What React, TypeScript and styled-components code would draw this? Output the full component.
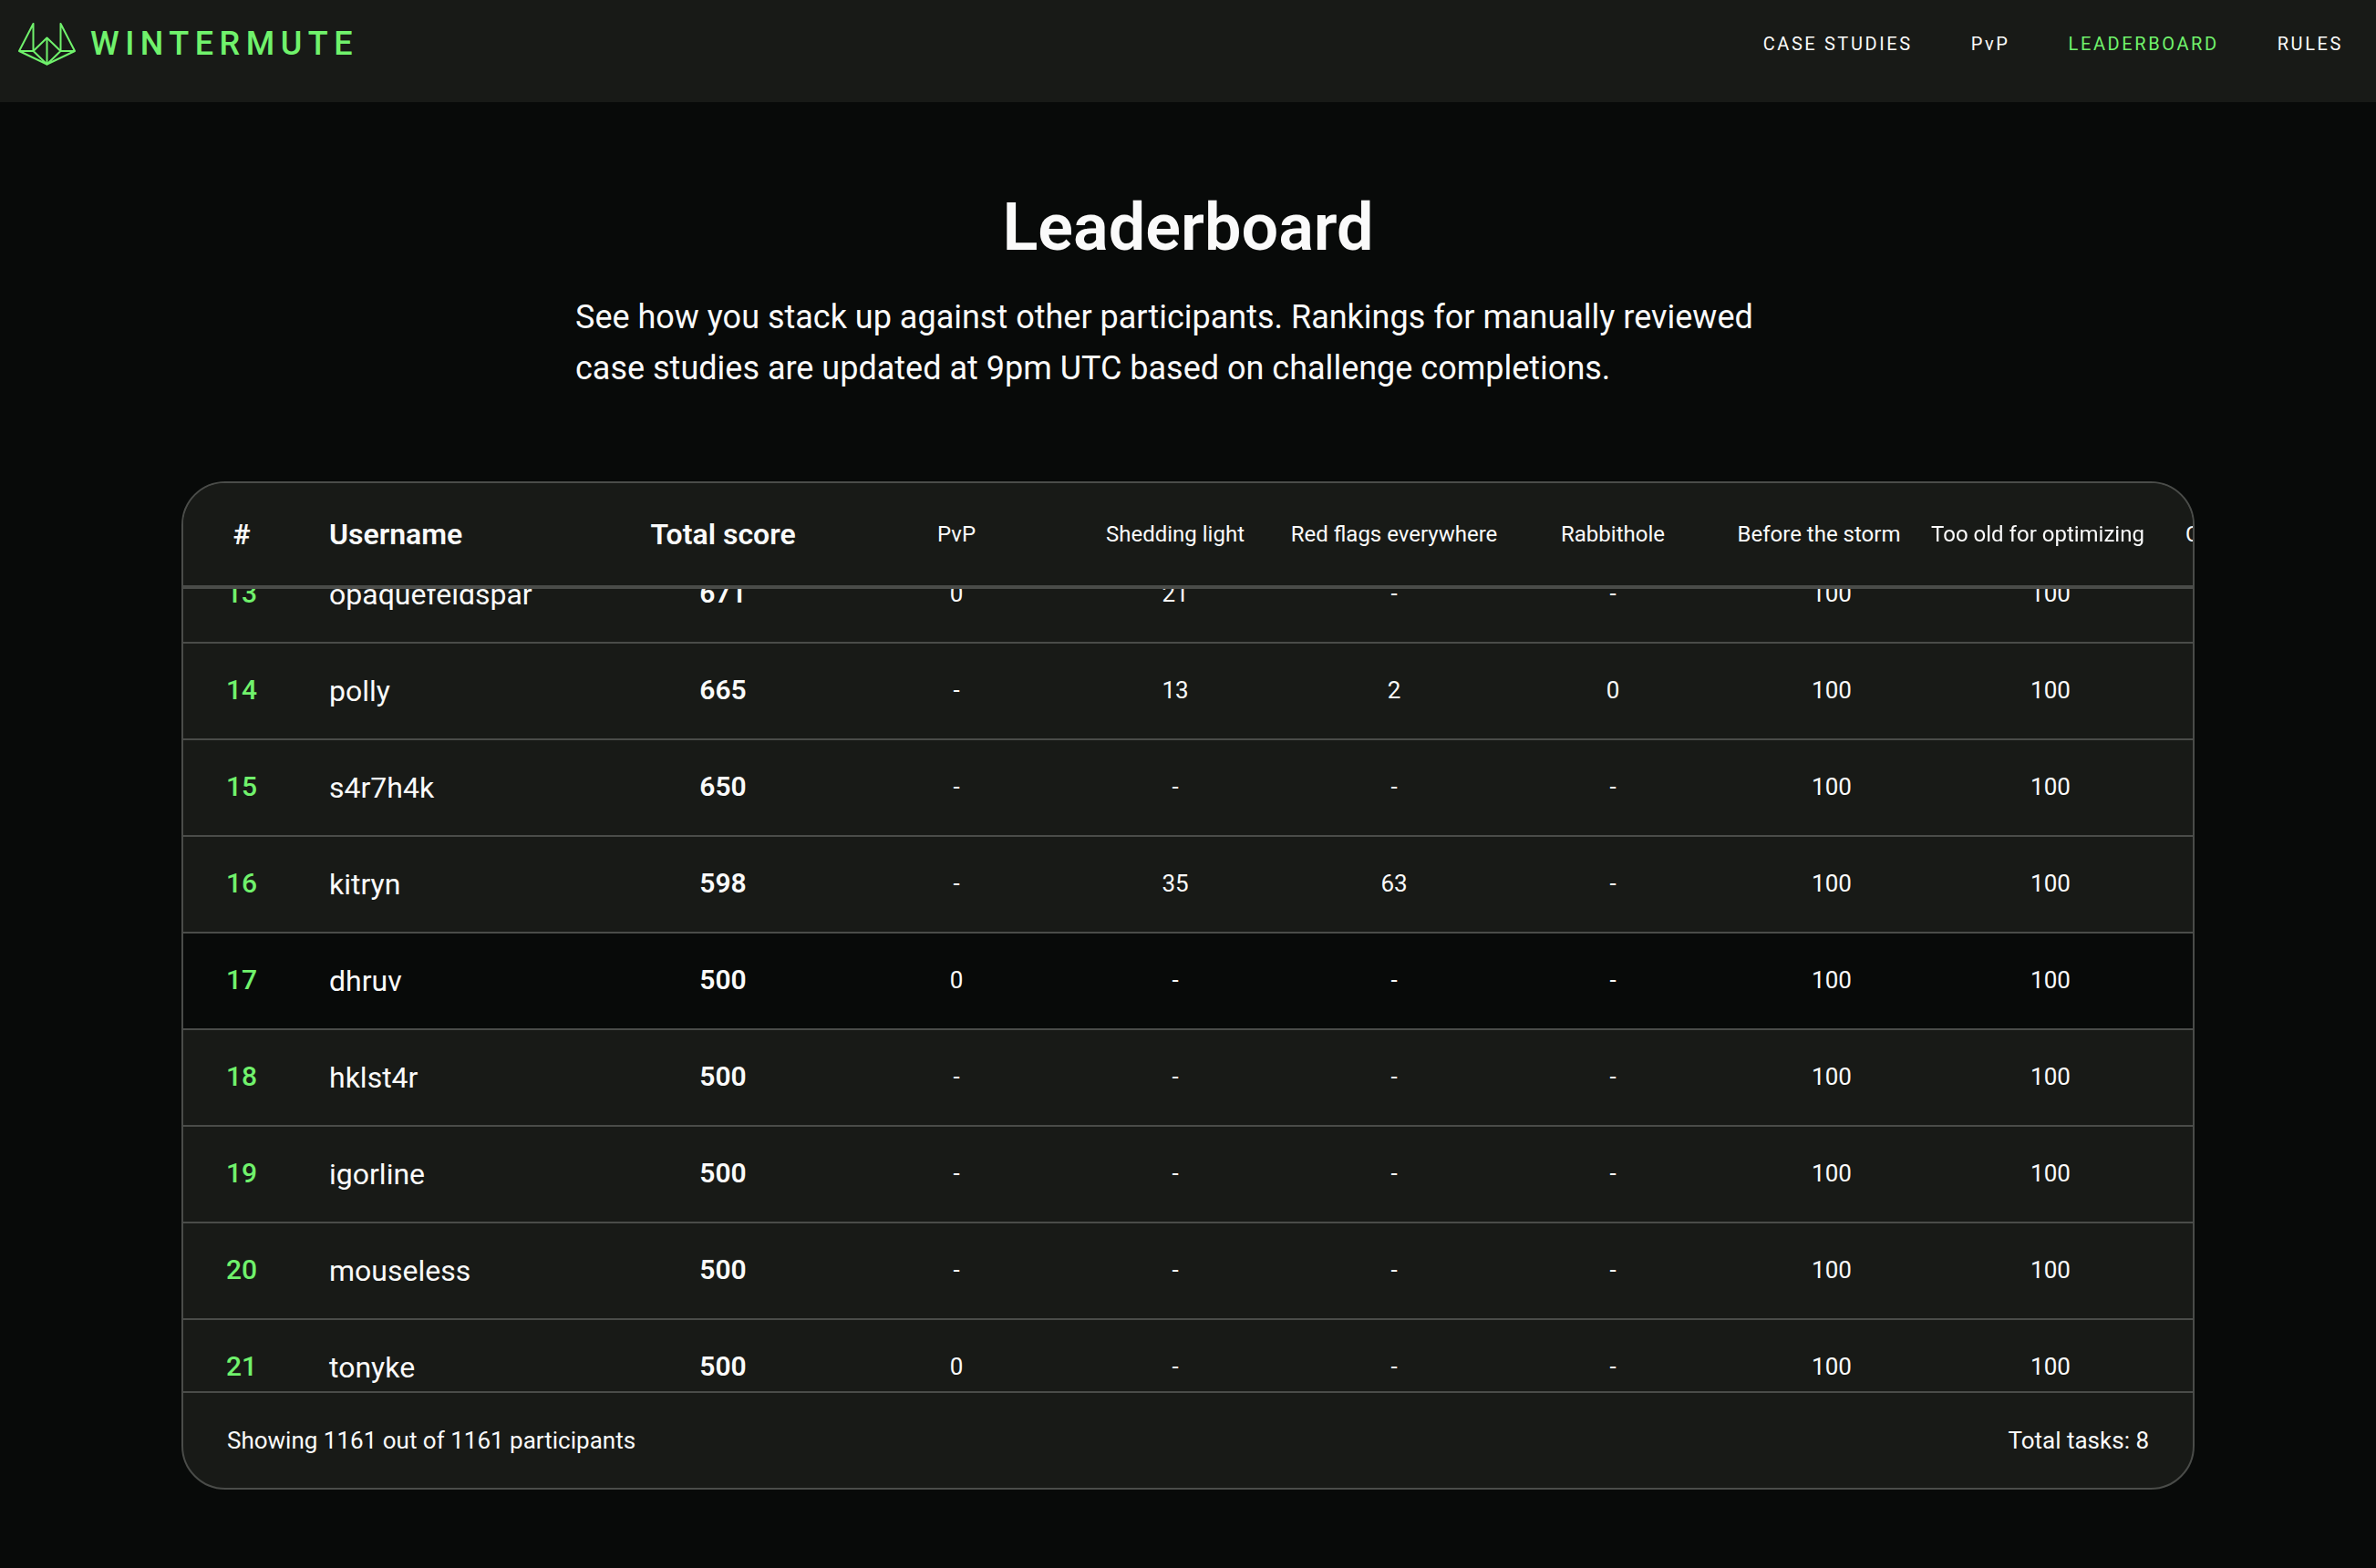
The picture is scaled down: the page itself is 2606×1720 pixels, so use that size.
import React, { useLayoutEffect, useRef } from "react";
import styled, { createGlobalStyle } from "styled-components";

const color = {
  page: "#080a09",
  panel: "#181a17",
  line: "#4a4c49",
  text: "#fafafa",
  accent: "#70f26c",
};

const GlobalStyle = createGlobalStyle`
  *, *::before, *::after { box-sizing: border-box; }
  body {
    margin: 0;
    background: ${color.page};
    color: ${color.text};
    font-family: Roboto, "Liberation Sans", sans-serif;
    -webkit-font-smoothing: antialiased;
  }
`;

const Header = styled.header`
  display: flex;
  align-items: center;
  justify-content: space-between;
  padding: 24px 36px 40px 20px;
  background: ${color.panel};
`;

const Brand = styled.a`
  display: flex;
  align-items: center;
  gap: 16px;
  height: 48px;
  color: ${color.accent};
  font-size: 36px;
  font-weight: 500;
  line-height: 48px;
  letter-spacing: 0.18em;
  text-decoration: none;
`;

const Nav = styled.nav`
  display: flex;
  gap: 64px;
`;

const NavLink = styled.a<{ $active?: boolean }>`
  color: ${(p) => (p.$active ? color.accent : color.text)};
  font-size: 20px;
  font-weight: 400;
  line-height: 24px;
  letter-spacing: 0.13em;
  text-decoration: none;
`;

const Main = styled.main`
  display: flex;
  flex-direction: column;
  align-items: center;
  padding: 96px 32px 84px;
`;

const Title = styled.h1`
  margin: 0 0 28px;
  font-size: 72px;
  font-weight: 600;
  line-height: 84px;
`;

const Intro = styled.p`
  width: 100%;
  max-width: 1344px;
  margin: 0 0 96px;
  font-size: 36px;
  line-height: 56px;
`;

const Card = styled.section`
  width: 100%;
  max-width: 2208px;
  overflow: hidden;
  border: 2px solid ${color.line};
  border-radius: 48px;
  background: ${color.panel};
`;

const Scroller = styled.div`
  max-height: 996px;
  overflow: auto;
  scrollbar-width: none;
`;

const Table = styled.table`
  width: 2408px;
  table-layout: fixed;
  border-collapse: separate;
  border-spacing: 0;
`;

const Column = styled.col<{ $width: number }>`
  width: ${(p) => p.$width}px;
`;

const HeadCell = styled.th<{ $main?: boolean; $left?: boolean }>`
  position: sticky;
  top: 0;
  height: 116px;
  padding: 0 0 0 ${(p) => (p.$left ? 32 : 0)}px;
  border-bottom: 4px solid ${color.line};
  background: ${color.panel};
  font-size: ${(p) => (p.$main ? 32 : 24)}px;
  font-weight: ${(p) => (p.$main ? 600 : 400)};
  text-align: ${(p) => (p.$left ? "left" : "center")};
  white-space: nowrap;
`;

const LateHeadCell = styled(HeadCell)`
  padding-right: 28px;
`;

const HeadLabel = styled.span`
  display: flex;
  justify-content: center;
`;

const NextHeadCell = styled(HeadCell)`
  padding-left: 28px;
`;

const Row = styled.tr<{ $current: boolean }>`
  background: ${(p) => (p.$current ? color.page : color.panel)};
`;

const Cell = styled.td`
  height: 106px;
  padding: 0 0 2px;
  border-bottom: 2px solid ${color.line};
  font-size: 26px;
  text-align: center;
`;

const RankCell = styled(Cell)`
  padding-bottom: 4px;
  color: ${color.accent};
  font-size: 30px;
  font-weight: 500;
`;

const NameCell = styled(Cell)`
  padding: 0 32px;
  font-size: 32px;
  text-align: left;
`;

const TotalCell = styled(Cell)`
  padding-bottom: 4px;
  font-size: 30px;
  font-weight: 600;
`;

const CardFooter = styled.footer`
  display: flex;
  align-items: center;
  justify-content: space-between;
  height: 106px;
  padding: 0 48px;
  border-top: 2px solid ${color.line};
  font-size: 26px;
`;

const earlyTasks = ["PvP", "Shedding light", "Red flags everywhere", "Rabbithole"];
const lateTasks = ["Before the storm", "Too old for optimizing"];
const tasks = [...earlyTasks, ...lateTasks];

type Score = number | null;
type Entry = { rank: number; name: string; total: number; scores: Score[] };

const entries: Entry[] = [
  { rank: 13, name: "opaquefeldspar", total: 671, scores: [0, 21, null, null, 100, 100] },
  { rank: 14, name: "polly", total: 665, scores: [null, 13, 2, 0, 100, 100] },
  { rank: 15, name: "s4r7h4k", total: 650, scores: [null, null, null, null, 100, 100] },
  { rank: 16, name: "kitryn", total: 598, scores: [null, 35, 63, null, 100, 100] },
  { rank: 17, name: "dhruv", total: 500, scores: [0, null, null, null, 100, 100] },
  { rank: 18, name: "hklst4r", total: 500, scores: [null, null, null, null, 100, 100] },
  { rank: 19, name: "igorline", total: 500, scores: [null, null, null, null, 100, 100] },
  { rank: 20, name: "mouseless", total: 500, scores: [null, null, null, null, 100, 100] },
  { rank: 21, name: "tonyke", total: 500, scores: [0, null, null, null, 100, 100] },
];

const CURRENT_RANK = 17;
const INITIAL_SCROLL = 46;

function Logo() {
  return (
    <svg width="63" height="48" viewBox="0 0 63 48" fill="none" stroke="currentColor" strokeWidth="2" strokeLinejoin="round" aria-hidden="true">
      <path d="M1 32 16.500 2V32Z" />
      <path d="M62 32 46.500 2V32Z" />
      <path d="M16.500 32 31.500 17.500 46.500 32 31.500 46.500Z" />
      <path d="M31.500 17.500V46.500" />
      <path d="M1 32 31.500 46.500 62 32" />
    </svg>
  );
}

export default function App() {
  const scroller = useRef<HTMLDivElement>(null);

  useLayoutEffect(() => {
    if (scroller.current) scroller.current.scrollTop = INITIAL_SCROLL;
  }, []);

  return (
    <>
      <GlobalStyle />
      <Header>
        <Brand href="#">
          <Logo />
          WINTERMUTE
        </Brand>
        <Nav>
          <NavLink href="#case-studies">CASE STUDIES</NavLink>
          <NavLink href="#pvp">PvP</NavLink>
          <NavLink href="#leaderboard" $active aria-current="page">LEADERBOARD</NavLink>
          <NavLink href="#rules">RULES</NavLink>
        </Nav>
      </Header>
      <Main>
        <Title>Leaderboard</Title>
        <Intro>
          See how you stack up against other participants. Rankings for manually reviewed case
          studies are updated at 9pm UTC based on challenge completions.
        </Intro>
        <Card>
          <Scroller ref={scroller}>
            <Table>
              <colgroup>
                <Column $width={128} />
                <Column $width={328} />
                <Column $width={272} />
                {tasks.map((task) => (
                  <Column key={task} $width={240} />
                ))}
                <Column $width={240} />
              </colgroup>
              <thead>
                <tr>
                  <HeadCell $main>#</HeadCell>
                  <HeadCell $main $left>Username</HeadCell>
                  <HeadCell $main>Total score</HeadCell>
                  {earlyTasks.map((task) => (
                    <HeadCell key={task}>{task}</HeadCell>
                  ))}
                  {lateTasks.map((task) => (
                    <LateHeadCell key={task}>
                      <HeadLabel>{task}</HeadLabel>
                    </LateHeadCell>
                  ))}
                  <NextHeadCell $left>C</NextHeadCell>
                </tr>
              </thead>
              <tbody>
                {entries.map((entry) => (
                  <Row key={entry.rank} $current={entry.rank === CURRENT_RANK}>
                    <RankCell>{entry.rank}</RankCell>
                    <NameCell>{entry.name}</NameCell>
                    <TotalCell>{entry.total}</TotalCell>
                    {entry.scores.map((score, i) => (
                      <Cell key={tasks[i]}>{score ?? "-"}</Cell>
                    ))}
                    <Cell />
                  </Row>
                ))}
              </tbody>
            </Table>
          </Scroller>
          <CardFooter>
            <span>Showing 1161 out of 1161 participants</span>
            <span>Total tasks: 8</span>
          </CardFooter>
        </Card>
      </Main>
    </>
  );
}
